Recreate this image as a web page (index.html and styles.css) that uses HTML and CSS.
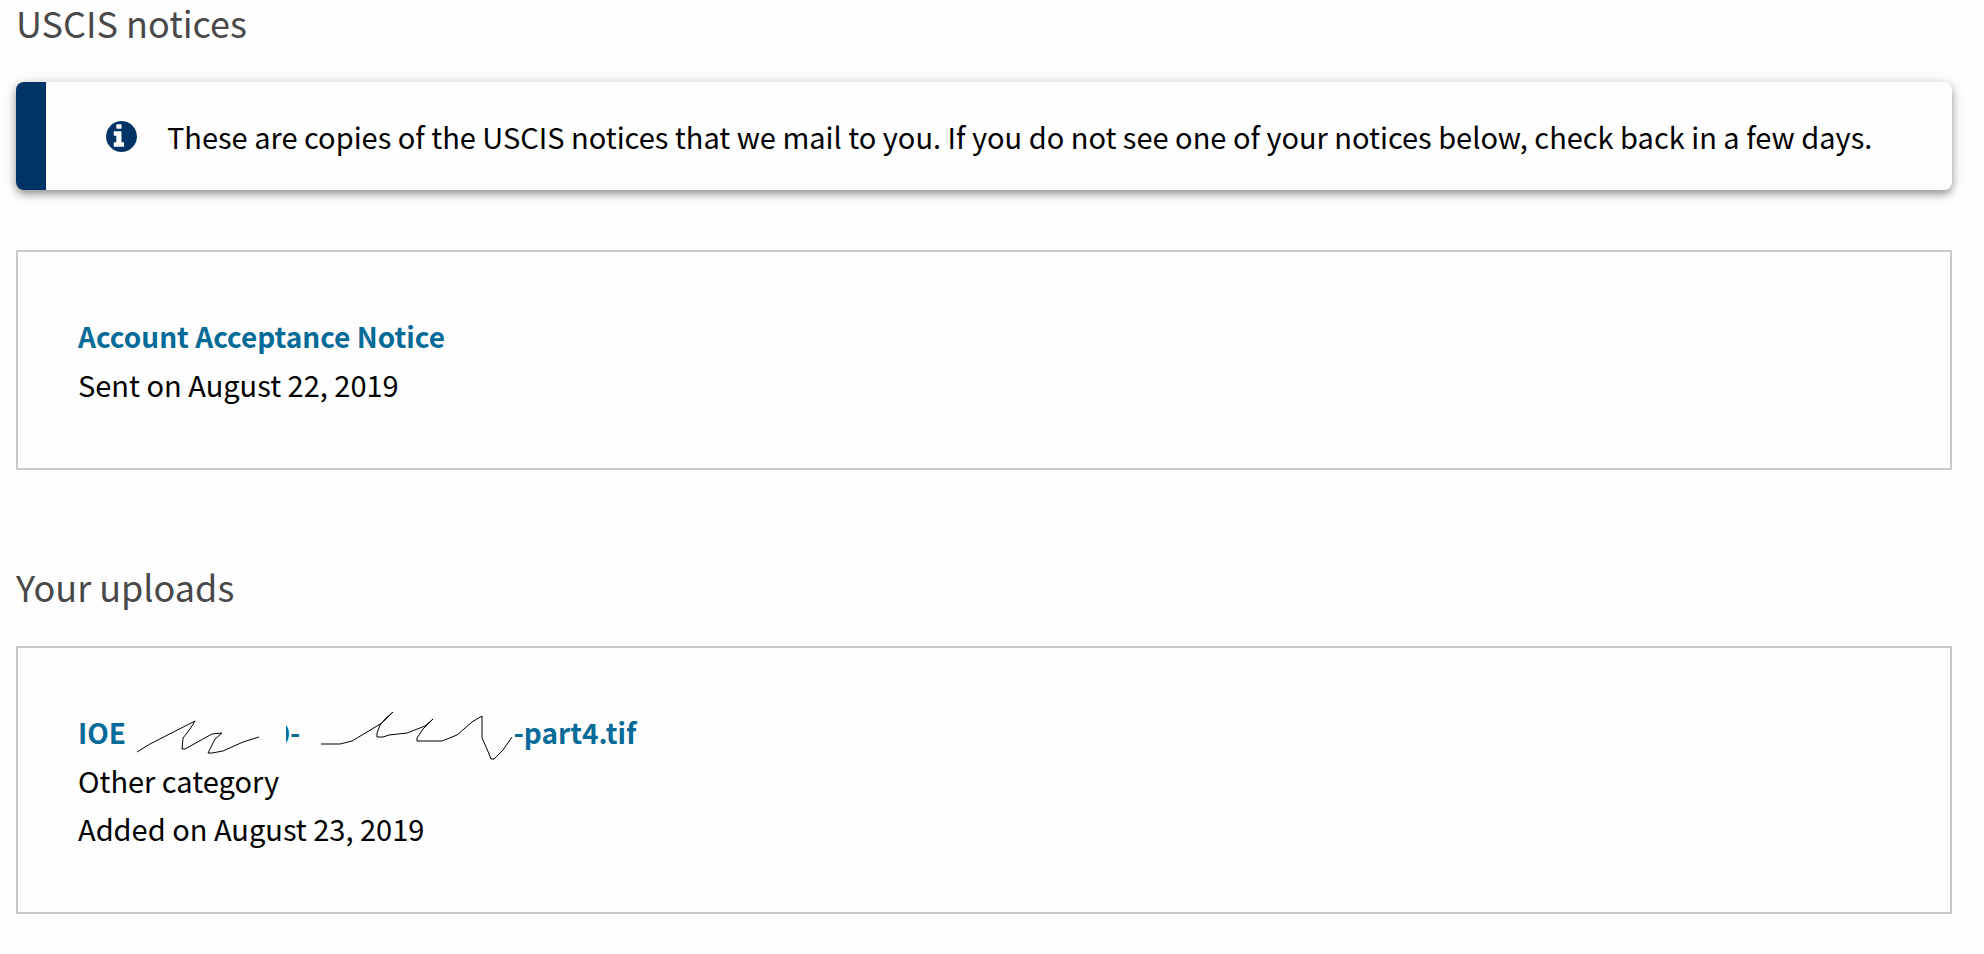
FILE: index.html
```
<!DOCTYPE html>
<html lang="en">
<head>
  <meta charset="UTF-8">
  <title>USCIS notices</title>
  <link rel="stylesheet" href="styles.css">
</head>
<body>
  <section class="notices">
    <h2>USCIS notices</h2>

    <div class="alert">
      <svg class="alert-icon" viewBox="128 128 1536 1536" aria-hidden="true">
        <path d="M1024 1376v-160q0-14-9-23t-23-9h-96v-512q0-14-9-23t-23-9h-320q-14 0-23 9t-9 23v160q0 14 9 23t23 9h96v320h-96q-14 0-23 9t-9 23v160q0 14 9 23t23 9h448q14 0 23-9t9-23zm-128-896v-160q0-14-9-23t-23-9h-192q-14 0-23 9t-9 23v160q0 14 9 23t23 9h192q14 0 23-9t9-23zm768 416q0 209-103 385.5t-279.5 279.5-385.5 103-385.5-103-279.5-279.5-103-385.5 103-385.5 279.5-279.5 385.5-103 385.5 103 279.5 279.5 103 385.5z"/>
      </svg>
      <p>These are copies of the USCIS notices that we mail to you. If you do not see one of your notices below, check back in a few days.</p>
    </div>

    <div class="document">
      <a class="file-name" href="#">Account Acceptance Notice</a>
      <p>Sent on August 22, 2019</p>
    </div>
  </section>

  <section class="uploads">
    <h2>Your uploads</h2>

    <div class="document">
      <a class="file-name" href="#">
        <span>IOE</span>
        <!-- receipt number is scribbled out -->
        <svg class="scribble" width="160" height="48" viewBox="126 708 160 48" aria-hidden="true">
          <path d="M137 752L150 744L195 721L190 729L183 738L182 749H185L212 734L222 733L215 739L208 753H212L223 751L243 742L259 737"/>
        </svg>
        <span class="cut-digit">0</span>
        <span>-</span>
        <svg class="scribble" width="213" height="48" viewBox="300 708 213 48" aria-hidden="true">
          <path d="M321 744H340L352 741L367 732L382 723L393 712L386 718L380 725L377 733V737H383L389 735L407 733L425 726L433 719L423 729L417 738V741H442L457 735L472 722L482 716V738L487 749L491 759H494L503 750L512 737"/>
        </svg>
        <span>-part4.tif</span>
      </a>
      <p>Other category</p>
      <p>Added on August 23, 2019</p>
    </div>
  </section>
</body>
</html>
```
FILE: styles.css
```
body {
  margin: 0;
  padding: 0 32px 0 16px;
  font-family: "Noto Sans CJK SC", "Noto Sans", sans-serif;
  font-size: 29px;
  line-height: 48px;
  color: #000;
  background: #fefefe;
}
h2 {
  margin: 0 0 38px;
  font-size: 36px;
  line-height: 44px;
  font-weight: 400;
  color: #494949;
}
p {
  margin: 0;
}
.alert {
  display: flex;
  align-items: center;
  gap: 30px;
  margin-bottom: 60px;
  padding: 30px 60px;
  border-left: 30px solid #003366;
  border-radius: 8px;
  background: #fefefe;
  box-shadow: 0 4px 8px rgba(0,0,0,0.4), 0 0 20px rgba(0,0,0,0.08);
}
.alert-icon {
  flex: none;
  width: 31px;
  height: 31px;
  fill: #003366;
}
.document {
  padding: 60px;
  border: 2px solid #c8c8c8;
}
.uploads {
  padding-top: 94px;
}
.file-name {
  display: flex;
  color: #046b99;
  font-size: 28px;
  font-weight: 700;
  text-decoration: none;
}
.scribble {
  flex: none;
  overflow: visible;
  fill: none;
  stroke: #000;
  stroke-width: 1;
}
/* only the right edge of the digit is left showing */
.cut-digit {
  display: flex;
  justify-content: flex-end;
  width: 4px;
  overflow: hidden;
}
```
